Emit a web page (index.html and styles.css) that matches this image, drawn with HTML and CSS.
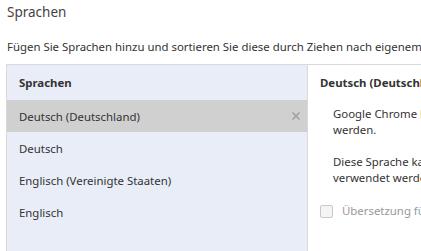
FILE: index.html
```html
<!DOCTYPE html>
<html lang="de">
<head>
    <meta charset="UTF-8">
    <title>Sprachen</title>
    <link rel="stylesheet" href="styles.css">
</head>
<body>
    <div class="page">
        <h1 class="title">Sprachen</h1>
        <p class="intro">Fügen Sie Sprachen hinzu und sortieren Sie diese durch Ziehen nach eigenem Wunsch.</p>

        <div class="lang-box">
            <div class="lang-list">
                <div class="list-header">Sprachen</div>
                <div class="lang-item selected">
                    <span>Deutsch (Deutschland)</span>
                    <svg class="remove" width="10" height="10" viewBox="0 0 10 10">
                        <path d="M1.5 1.5 L8.5 8.5 M8.5 1.5 L1.5 8.5" stroke="#a0a0a0" stroke-width="1.6" fill="none"/>
                    </svg>
                </div>
                <div class="lang-item"><span>Deutsch</span></div>
                <div class="lang-item"><span>Englisch (Vereinigte Staaten)</span></div>
                <div class="lang-item"><span>Englisch</span></div>
            </div>

            <div class="lang-detail">
                <div class="detail-header">Deutsch (Deutschland)</div>
                <p class="detail-text">Google Chrome kann in dieser Sprache angezeigt werden.</p>
                <p class="detail-text">Diese Sprache kann für die Rechtschreibprüfung verwendet werden.</p>
                <label class="translate">
                    <span class="checkbox"></span>
                    <span>Übersetzung für diese Sprache anbieten</span>
                </label>
            </div>
        </div>
    </div>
</body>
</html>
```

FILE: styles.css
```css
* {
    margin: 0;
    padding: 0;
    box-sizing: border-box;
}

body {
    font-family: 'Noto Sans', 'Open Sans', sans-serif;
    font-size: 11.4px;
    color: #333;
    background: #fff;
    overflow: hidden;
}

.page {
    padding: 3px 0 0 7px;
    width: 640px;
}

.title {
    font-size: 13.5px;
    font-weight: 400;
    color: #444;
    line-height: 18px;
}

.intro {
    margin-top: 18px;
    line-height: 16px;
    white-space: nowrap;
}

.lang-box {
    display: flex;
    margin-top: 9px;
    margin-left: -1px;
    border-top: 1px solid #d9d9d9;
    border-left: 1px solid #d9d9d9;
    height: 200px;
}

.lang-list {
    width: 301px;
    background: #e8edf8;
    border-right: 1px solid #d9d9d9;
}

.list-header {
    height: 35px;
    line-height: 34px;
    padding: 1px 0 0 12px;
    font-weight: 700;
}

.lang-item {
    height: 32px;
    display: flex;
    align-items: center;
    justify-content: space-between;
    padding: 0 6px 0 12px;
}

.lang-item.selected {
    background: #d0d0d0;
}

.lang-detail {
    flex: 1;
    padding: 0 0 0 12px;
    white-space: nowrap;
    overflow: hidden;
}

.detail-header {
    height: 35px;
    line-height: 34px;
    padding-top: 1px;
    font-weight: 700;
}

.detail-text {
    padding-left: 13px;
    line-height: 16px;
    margin: 6px 0 16px;
    white-space: normal;
    width: 285px;
}

.translate {
    display: flex;
    align-items: center;
    gap: 9px;
    margin-top: 17px;
    color: #999;
    line-height: 16px;
}

.checkbox {
    width: 13px;
    height: 13px;
    border: 1px solid #c8c8c8;
    border-radius: 2px;
    background: #f4f4f4;
}
```
